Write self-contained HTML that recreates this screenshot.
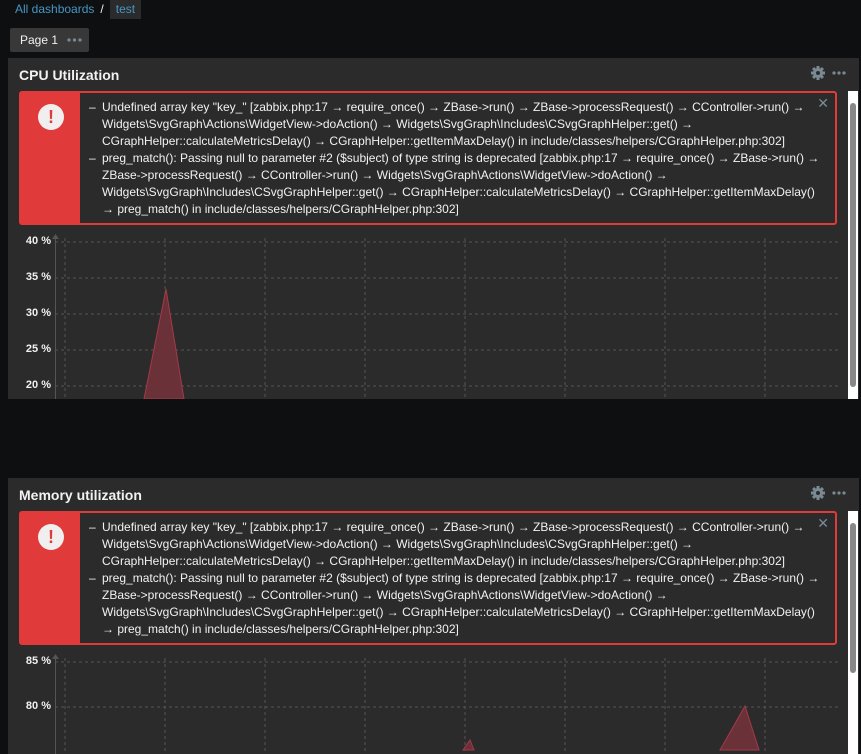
<!DOCTYPE html>
<html><head><meta charset="utf-8"><style>
*{margin:0;padding:0;box-sizing:border-box}
body{width:861px;height:754px;background:#0e0f10;font-family:"Liberation Sans",Arial,sans-serif;position:relative;overflow:hidden;color:#f2f2f2}
.bc{position:absolute;top:0;left:15px;font-size:12px;color:#4796c4;height:20px;line-height:18px}
.bc .sep{color:#f2f2f2;margin:0 6px}
.bc .cur{background:#2b2b2b;padding:2px 6px 3px}
.page{position:absolute;left:10px;top:28px;width:79px;height:24px;background:#383838;border-radius:2px;font-size:12px;line-height:24px;padding-left:10px;color:#f2f2f2}
.page .d{position:absolute;left:57px;top:10px;width:15px;height:4px}
.w{position:absolute;left:8px;width:851px;background:#2b2b2b;overflow:hidden}
.w h3{position:absolute;left:11px;top:9px;font-size:14px;font-weight:bold;color:#f2f2f2}
.tools{position:absolute;right:8px;top:8px}
.err{position:absolute;left:11px;width:818px;height:134px;border:2px solid #e03a3a;border-radius:3px;background:#2b2b2b}
.err .red{position:absolute;left:0;top:0;bottom:0;width:59px;background:#e03a3a}
.err .ic{position:absolute;left:17px;top:11px;width:26px;height:26px;border-radius:50%;background:#f0eeee;color:#e03a3a;font-weight:bold;font-size:18px;text-align:center;line-height:26px}
.err .tx{position:absolute;left:68px;top:6px;font-size:12px;line-height:17px;white-space:nowrap;color:#f2f2f2}
.err .tx div{padding-left:13px;position:relative}
.err .tx .b:before{content:"–";position:absolute;left:0}
.err .x{position:absolute;right:6px;top:2px;color:#7a8a95;font-size:14px}
.sb{position:absolute;right:1px;width:10px;background:#fff}
.sb .th{position:absolute;left:2px;width:6px;background:#888;border-radius:3px}
.lab{position:absolute;font-size:11px;font-weight:bold;color:#f2f2f2;text-align:right;width:40px}
</style></head><body>
<div class="bc">All dashboards<span class="sep">/</span><span class="cur">test</span></div>
<div class="page">Page 1<svg class="d" viewBox="0 0 15 4"><circle cx="2" cy="2" r="1.6" fill="#7a8a95"/><circle cx="7.5" cy="2" r="1.6" fill="#7a8a95"/><circle cx="13" cy="2" r="1.6" fill="#7a8a95"/></svg></div>

<!-- widget 1 -->
<div class="w" style="top:58px;height:341px">
<h3>CPU Utilization</h3>
<svg class="tools" width="40" height="16" viewBox="0 0 40 16"><g fill="#7a8a95"><circle cx="7" cy="7" r="5"/><rect x="5.5" y="0" width="3" height="14"/><rect x="0" y="5.5" width="14" height="3"/><rect x="5.5" y="0" width="3" height="14" transform="rotate(45 7 7)"/><rect x="5.5" y="0" width="3" height="14" transform="rotate(-45 7 7)"/></g><circle cx="7" cy="7" r="2" fill="#2b2b2b"/><g fill="#7a8a95"><circle cx="23" cy="7" r="1.6"/><circle cx="28" cy="7" r="1.6"/><circle cx="33" cy="7" r="1.6"/></g></svg>
<svg style="position:absolute;left:0;top:0" width="851" height="341">
<g stroke="#555" stroke-dasharray="3,3" stroke-width="1">
<line x1="47" y1="184" x2="830" y2="184"/><line x1="47" y1="220" x2="830" y2="220"/><line x1="47" y1="256" x2="830" y2="256"/><line x1="47" y1="292" x2="830" y2="292"/><line x1="47" y1="328" x2="830" y2="328"/>
<line x1="57" y1="180" x2="57" y2="341"/><line x1="157" y1="180" x2="157" y2="341"/><line x1="257" y1="180" x2="257" y2="341"/><line x1="357" y1="180" x2="357" y2="341"/><line x1="457" y1="180" x2="457" y2="341"/><line x1="557" y1="180" x2="557" y2="341"/><line x1="657" y1="180" x2="657" y2="341"/><line x1="757" y1="180" x2="757" y2="341"/>
</g>
<line x1="47.5" y1="178" x2="47.5" y2="341" stroke="#555"/>
<path d="M44 181 L47.5 176 L51 181Z" fill="#555"/>
<path d="M136 341 L158 231 L176 341Z" fill="#6a3138" stroke="#a33a4a"/>
</svg>
<div class="lab" style="left:3px;top:177px">40 %</div>
<div class="lab" style="left:3px;top:213px">35 %</div>
<div class="lab" style="left:3px;top:249px">30 %</div>
<div class="lab" style="left:3px;top:285px">25 %</div>
<div class="lab" style="left:3px;top:321px">20 %</div>
<div class="err" style="top:33px"><div class="red"></div><div class="ic">!</div><div class="x">✕</div>
<div class="tx">
<div class="b">Undefined array key "key_" [zabbix.php:17 → require_once() → ZBase-&gt;run() → ZBase-&gt;processRequest() → CController-&gt;run() →</div>
<div>Widgets\SvgGraph\Actions\WidgetView-&gt;doAction() → Widgets\SvgGraph\Includes\CSvgGraphHelper::get() →</div>
<div>CGraphHelper::calculateMetricsDelay() → CGraphHelper::getItemMaxDelay() in include/classes/helpers/CGraphHelper.php:302]</div>
<div class="b">preg_match(): Passing null to parameter #2 ($subject) of type string is deprecated [zabbix.php:17 → require_once() → ZBase-&gt;run() →</div>
<div>ZBase-&gt;processRequest() → CController-&gt;run() → Widgets\SvgGraph\Actions\WidgetView-&gt;doAction() →</div>
<div>Widgets\SvgGraph\Includes\CSvgGraphHelper::get() → CGraphHelper::calculateMetricsDelay() → CGraphHelper::getItemMaxDelay()</div>
<div>→ preg_match() in include/classes/helpers/CGraphHelper.php:302]</div>
</div></div>
<div class="sb" style="top:33px;height:308px"><div class="th" style="top:12px;height:284px"></div></div>
</div>

<!-- widget 2 -->
<div class="w" style="top:478px;height:276px">
<h3>Memory utilization</h3>
<svg class="tools" width="40" height="16" viewBox="0 0 40 16"><g fill="#7a8a95"><circle cx="7" cy="7" r="5"/><rect x="5.5" y="0" width="3" height="14"/><rect x="0" y="5.5" width="14" height="3"/><rect x="5.5" y="0" width="3" height="14" transform="rotate(45 7 7)"/><rect x="5.5" y="0" width="3" height="14" transform="rotate(-45 7 7)"/></g><circle cx="7" cy="7" r="2" fill="#2b2b2b"/><g fill="#7a8a95"><circle cx="23" cy="7" r="1.6"/><circle cx="28" cy="7" r="1.6"/><circle cx="33" cy="7" r="1.6"/></g></svg>
<svg style="position:absolute;left:0;top:0" width="851" height="276">
<g stroke="#555" stroke-dasharray="3,3" stroke-width="1">
<line x1="47" y1="184" x2="830" y2="184"/><line x1="47" y1="229" x2="830" y2="229"/>
<line x1="57" y1="180" x2="57" y2="276"/><line x1="157" y1="180" x2="157" y2="276"/><line x1="257" y1="180" x2="257" y2="276"/><line x1="357" y1="180" x2="357" y2="276"/><line x1="457" y1="180" x2="457" y2="276"/><line x1="557" y1="180" x2="557" y2="276"/><line x1="657" y1="180" x2="657" y2="276"/><line x1="757" y1="180" x2="757" y2="276"/>
</g>
<line x1="47.5" y1="178" x2="47.5" y2="276" stroke="#555"/>
<path d="M44 181 L47.5 176 L51 181Z" fill="#555"/>
<path d="M455 272 L462 262 L466 272Z" fill="#6a3138" stroke="#a33a4a"/>
<path d="M712 272 L737 228 L751 272Z" fill="#6a3138" stroke="#a33a4a"/>
</svg>
<div class="lab" style="left:3px;top:177px">85 %</div>
<div class="lab" style="left:3px;top:222px">80 %</div>
<div class="err" style="top:33px"><div class="red"></div><div class="ic">!</div><div class="x">✕</div>
<div class="tx">
<div class="b">Undefined array key "key_" [zabbix.php:17 → require_once() → ZBase-&gt;run() → ZBase-&gt;processRequest() → CController-&gt;run() →</div>
<div>Widgets\SvgGraph\Actions\WidgetView-&gt;doAction() → Widgets\SvgGraph\Includes\CSvgGraphHelper::get() →</div>
<div>CGraphHelper::calculateMetricsDelay() → CGraphHelper::getItemMaxDelay() in include/classes/helpers/CGraphHelper.php:302]</div>
<div class="b">preg_match(): Passing null to parameter #2 ($subject) of type string is deprecated [zabbix.php:17 → require_once() → ZBase-&gt;run() →</div>
<div>ZBase-&gt;processRequest() → CController-&gt;run() → Widgets\SvgGraph\Actions\WidgetView-&gt;doAction() →</div>
<div>Widgets\SvgGraph\Includes\CSvgGraphHelper::get() → CGraphHelper::calculateMetricsDelay() → CGraphHelper::getItemMaxDelay()</div>
<div>→ preg_match() in include/classes/helpers/CGraphHelper.php:302]</div>
</div></div>
<div class="sb" style="top:33px;height:243px"><div class="th" style="top:12px;height:150px"></div></div>
</div>
</body></html>
